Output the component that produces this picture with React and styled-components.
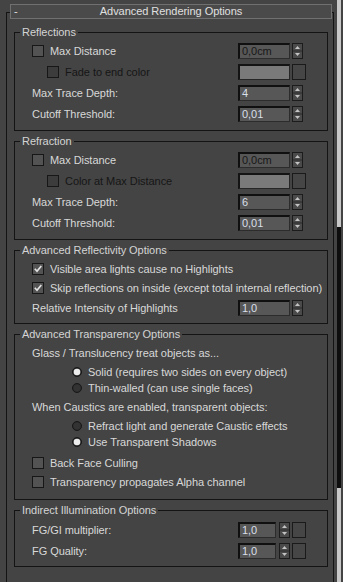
import React from 'react';
import styled, { createGlobalStyle } from 'styled-components';

const GlobalStyle = createGlobalStyle`
  html, body {
    margin: 0;
    padding: 0;
    background: #444444;
  }
  body {
    font-family: "Liberation Sans", Arial, sans-serif;
    font-size: 11px;
    letter-spacing: -0.05px;
    color: #d8d8d8;
  }
`;

const Screen = styled.div`
  display: flex;
  width: 343px;
  height: 582px;
  overflow: hidden;
  background: #444444;
`;

const Panel = styled.div`
  flex: 1;
`;

const Rollout = styled.div`
  margin: 12px 0 0 6px;
  width: 328px;
  box-sizing: border-box;
  height: 580px;
  border: 1px solid #141414;
  border-bottom: none;
  display: flex;
  flex-direction: column;
`;

const RolloutHeader = styled.div`
  margin: -9px 1px 0 3px;
  height: 15px;
  box-sizing: border-box;
  border: 1px solid #707070;
  background: #4a4a4a;
  display: grid;
  grid-template-columns: 20px 1fr 20px;
  align-items: center;
  line-height: 13px;
  color: #e0e0e0;
`;

const Minus = styled.span`
  padding-left: 3px;
`;

const HeaderTitle = styled.span`
  text-align: center;
`;

const Group = styled.section`
  margin: ${p => (p.$first ? 13 : 10)}px 5px 0 7px;
  border: 1px solid #141414;
  display: flex;
  flex-direction: column;
  padding: 0 0 ${p => p.$pb}px;
`;

const GroupTitle = styled.div`
  align-self: flex-start;
  margin: -7px 0 ${p => p.$pt}px 5px;
  padding: 0 2px;
  height: 13px;
  line-height: 13px;
  background: #444444;
  color: #d4d4d4;
`;

const Row = styled.div`
  display: grid;
  grid-template-columns: 1fr 89px;
  align-items: center;
  height: ${p => p.$h || 21}px;
  margin-top: ${p => p.$mt || 0}px;
  padding-left: ${p => 17 + (p.$indent || 0)}px;
  white-space: nowrap;
`;

const Label = styled.div`
  display: flex;
  align-items: center;
  color: ${p => (p.$disabled ? '#161616' : '#d8d8d8')};
`;

const Box = styled.span`
  flex: none;
  width: 12px;
  height: 12px;
  box-sizing: border-box;
  border: 1px solid #171717;
  background: ${p => (p.$disabled ? '#3c3c3c' : '#535353')};
  margin-right: 6px;
  display: flex;
  align-items: center;
  justify-content: center;
`;

const RadioDot = styled.svg`
  flex: none;
  margin-right: 6px;
`;

const Controls = styled.div`
  display: flex;
  align-items: center;
`;

const Field = styled.div`
  width: ${p => p.$w || 52}px;
  height: 16px;
  box-sizing: border-box;
  border-style: solid;
  border-width: 2px 1px 1px 2px;
  border-color: #101010 #2c2c2c #2c2c2c #101010;
  background: #575757;
  padding-left: 2px;
  line-height: 13px;
  color: ${p => (p.$disabled ? '#181818' : '#d9dfe8')};
`;

const Spin = styled.svg`
  flex: none;
  margin-left: ${p => p.$gap || 2}px;
`;

const Swatch = styled.div`
  width: 52px;
  height: 16px;
  box-sizing: border-box;
  border-style: solid;
  border-width: 2px 1px 1px 2px;
  border-color: #141414 #262626 #262626 #141414;
  background: #7a7a7a;
`;

const SmallBox = styled.div`
  flex: none;
  width: 14px;
  height: 16px;
  box-sizing: border-box;
  margin-left: 2px;
  border: 1px solid #1a1a1a;
  background: #464646;
`;

const ScrollTrack = styled.div`
  width: 4px;
  margin-right: 2px;
  background: #c8c8c8;
`;

const ScrollThumb = styled.div`
  margin-top: 227px;
  height: 261px;
  background: #0e0e0e;
`;

const Check = ({ checked, disabled }) => (
  <Box $disabled={disabled}>
    {checked && (
      <svg width="10" height="10" viewBox="0 0 10 10">
        <path d="M1.8 4.8 L4 7.2 L8.3 2" fill="none" stroke="#e2e2e2" strokeWidth="1.7" />
      </svg>
    )}
  </Box>
);

const Radio = ({ on }) => (
  <RadioDot width="10" height="10" viewBox="0 0 10 10">
    <circle cx="5" cy="5" r="4.5" fill="#2e2e2e" stroke="#181818" strokeWidth="1" />
    <circle cx="5" cy="5" r="3.3" fill={on ? '#ececec' : '#333333'} />
  </RadioDot>
);

const Spinner = ({ gap }) => (
  <Spin $gap={gap} width="11" height="16" viewBox="0 0 11 16">
    <rect x="0.5" y="0.5" width="10" height="15" fill="#4a4a4a" stroke="#1c1c1c" />
    <line x1="1" y1="8" x2="10" y2="8" stroke="#2a2a2a" />
    <path d="M3 6 L5.5 3 L8 6 Z" fill="#c4c4c4" />
    <path d="M3 10 L5.5 13 L8 10 Z" fill="#c4c4c4" />
  </Spin>
);

const NumberInput = ({ value, disabled, w, extra, gap }) => (
  <Controls>
    <Field $w={w} $disabled={disabled}>{value}</Field>
    <Spinner gap={gap} />
    {extra && <SmallBox />}
  </Controls>
);

const ColorInput = () => (
  <Controls>
    <Swatch />
    <SmallBox />
  </Controls>
);

const TraceGroup = ({ title, colorLabel, depth, first }) => (
  <Group $first={first} $pb={6}>
    <GroupTitle $pt={1}>{title}</GroupTitle>
    <Row>
      <Label><Check />Max Distance</Label>
      <NumberInput value="0,0cm" disabled />
    </Row>
    <Row $indent={15}>
      <Label $disabled><Check disabled />{colorLabel}</Label>
      <ColorInput />
    </Row>
    <Row>
      <Label>Max Trace Depth:</Label>
      <NumberInput value={depth} />
    </Row>
    <Row>
      <Label>Cutoff Threshold:</Label>
      <NumberInput value="0,01" />
    </Row>
  </Group>
);

const App = () => (
  <Screen>
    <GlobalStyle />
    <Panel>
      <Rollout>
        <RolloutHeader>
          <Minus>-</Minus>
          <HeaderTitle>Advanced Rendering Options</HeaderTitle>
          <span />
        </RolloutHeader>

        <TraceGroup first title="Reflections" colorLabel="Fade to end color" depth="4" />
        <TraceGroup title="Refraction" colorLabel="Color at Max Distance" depth="6" />

        <Group $pb={5}>
          <GroupTitle $pt={2}>Advanced Reflectivity Options</GroupTitle>
          <Row $h={19}>
            <Label><Check checked />Visible area lights cause no Highlights</Label>
          </Row>
          <Row $h={19}>
            <Label><Check checked />Skip reflections on inside (except total internal reflection)</Label>
          </Row>
          <Row>
            <Label>Relative Intensity of Highlights</Label>
            <NumberInput value="1,0" />
          </Row>
        </Group>

        <Group $pb={8}>
          <GroupTitle $pt={2}>Advanced Transparency Options</GroupTitle>
          <Row $h={20}>
            <Label>Glass / Translucency treat objects as...</Label>
          </Row>
          <Row $h={16} $mt={1} $indent={40}>
            <Label><Radio on />Solid (requires two sides on every object)</Label>
          </Row>
          <Row $h={16} $indent={40}>
            <Label><Radio />Thin-walled (can use single faces)</Label>
          </Row>
          <Row $h={18} $mt={2}>
            <Label>When Caustics are enabled, transparent objects:</Label>
          </Row>
          <Row $h={16} $mt={2} $indent={40}>
            <Label><Radio />Refract light and generate Caustic effects</Label>
          </Row>
          <Row $h={16} $indent={40}>
            <Label><Radio on />Use Transparent Shadows</Label>
          </Row>
          <Row $h={19} $mt={3}>
            <Label><Check />Back Face Culling</Label>
          </Row>
          <Row $h={19}>
            <Label><Check />Transparency propagates Alpha channel</Label>
          </Row>
        </Group>

        <Group $pb={5}>
          <GroupTitle $pt={2}>Indirect Illumination Options</GroupTitle>
          <Row>
            <Label>FG/GI multiplier:</Label>
            <NumberInput value="1,0" w={38} gap={3} extra />
          </Row>
          <Row>
            <Label>FG Quality:</Label>
            <NumberInput value="1,0" w={38} gap={3} extra />
          </Row>
        </Group>
      </Rollout>
    </Panel>
    <ScrollTrack>
      <ScrollThumb />
    </ScrollTrack>
  </Screen>
);

export default App;
